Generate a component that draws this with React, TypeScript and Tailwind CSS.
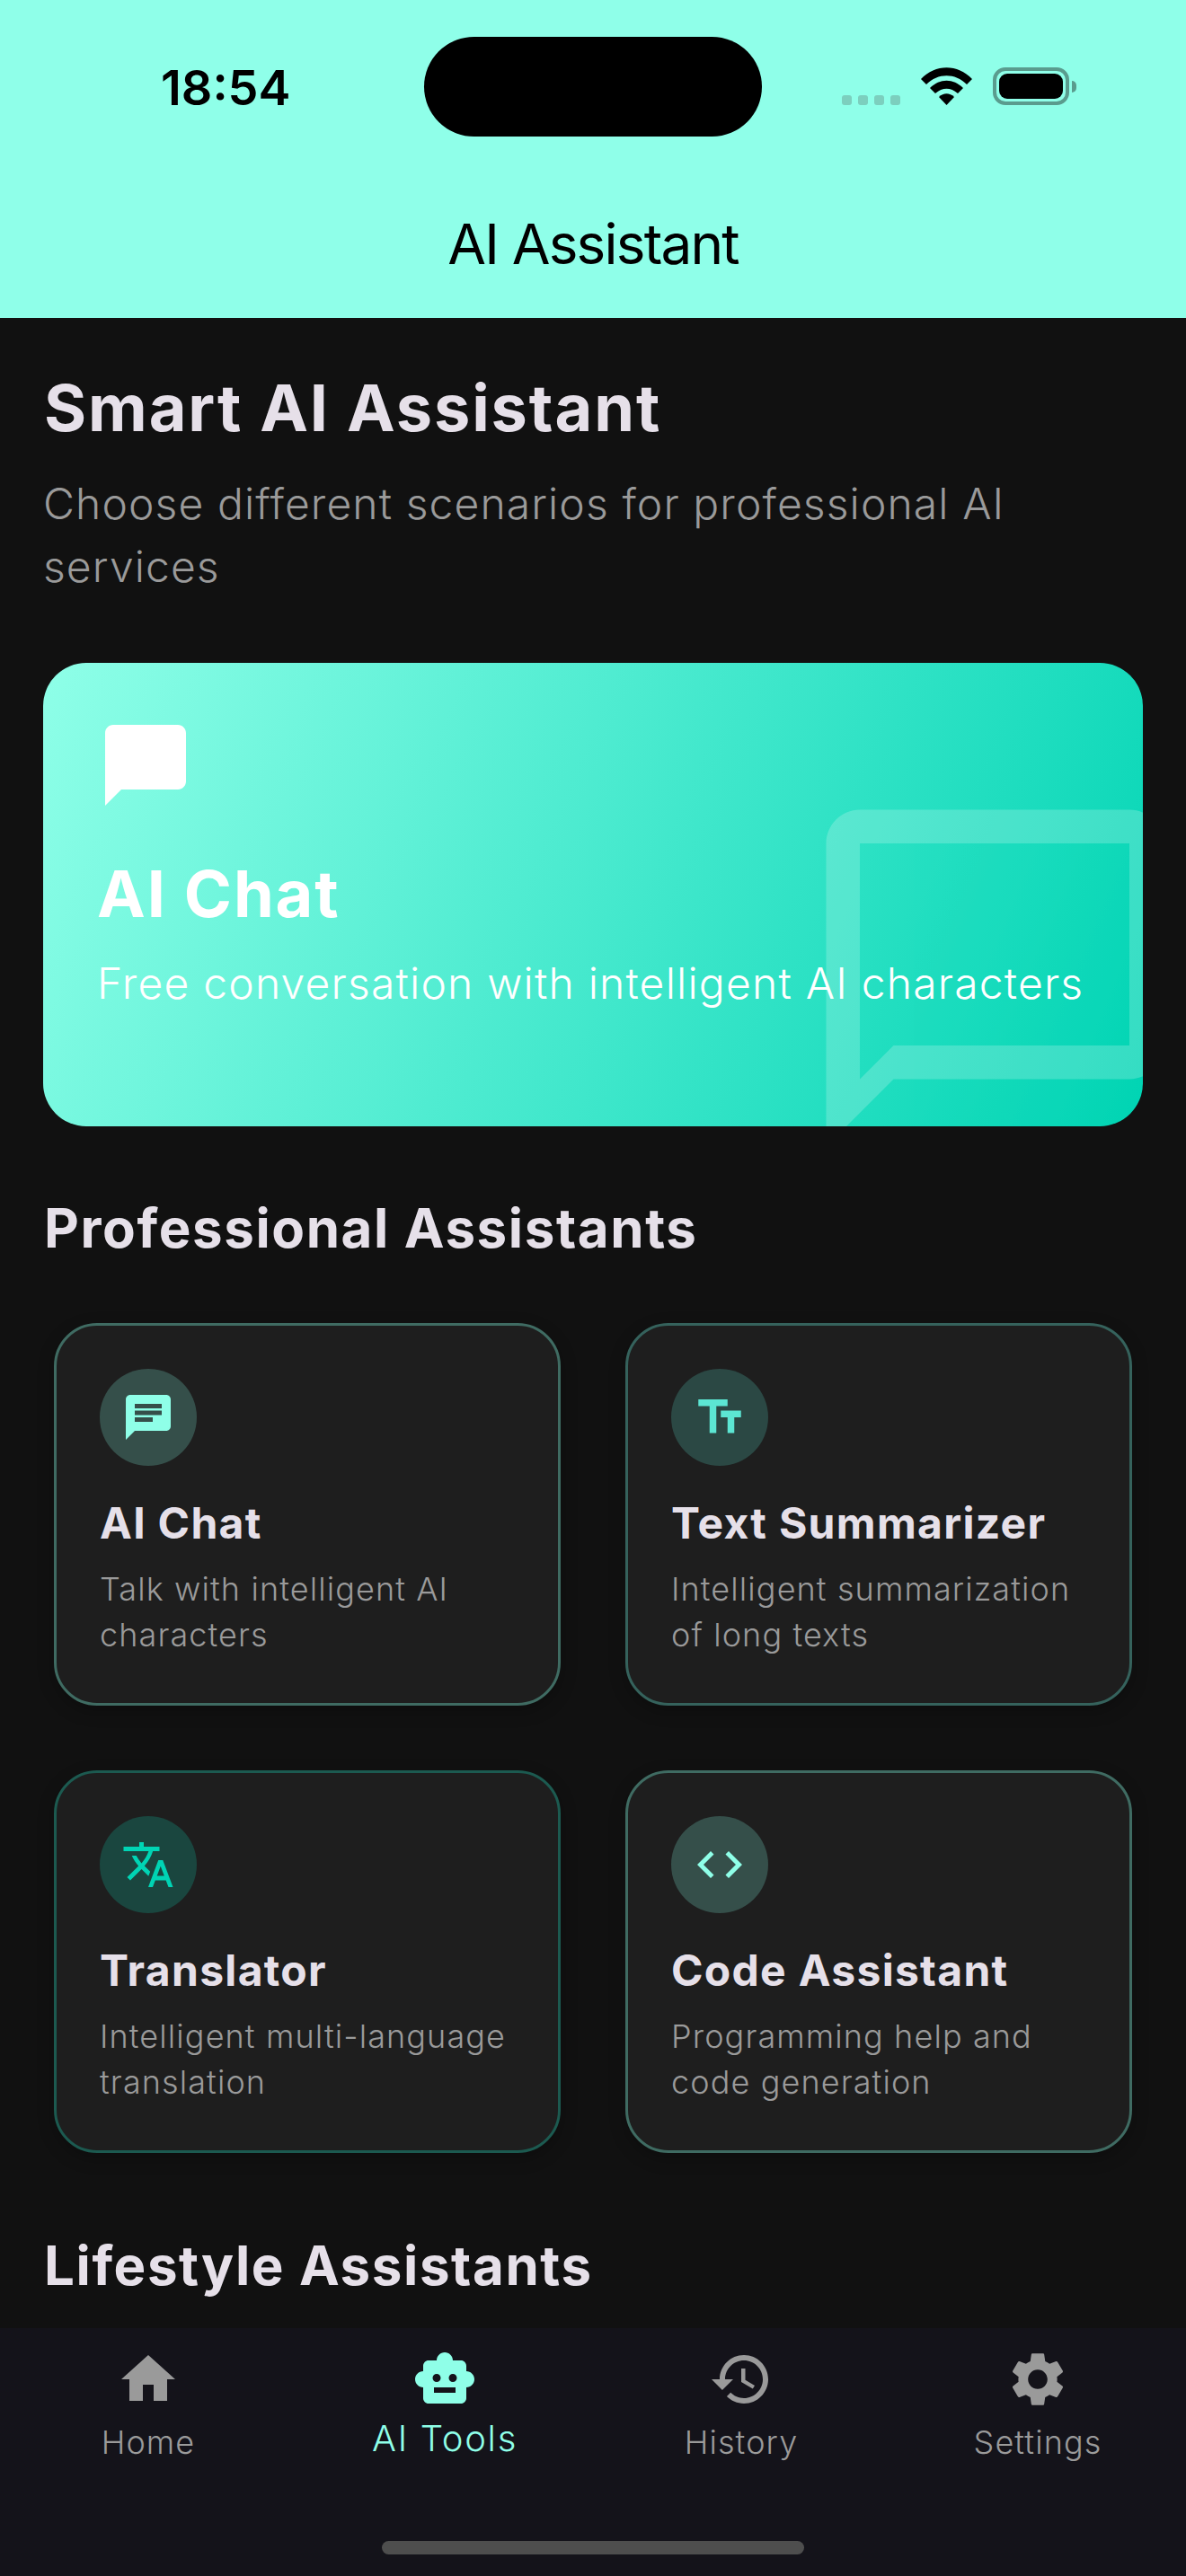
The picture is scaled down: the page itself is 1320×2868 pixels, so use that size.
const paths = {
  chatBubble: "M20 2H4c-1.1 0-2 .9-2 2v18l4-4h14c1.1 0 2-.9 2-2V4c0-1.1-.9-2-2-2z",
  chatOutline: "M20 2H4c-1.1 0-2 .9-2 2v18l4-4h14c1.1 0 2-.9 2-2V4c0-1.1-.9-2-2-2zm0 14H6l-2 2V4h16v12z",
  chat: "M20 2H4c-1.1 0-1.99.9-1.99 2L2 22l4-4h14c1.1 0 2-.9 2-2V4c0-1.1-.9-2-2-2zM6 9h12v2H6V9zm8 5H6v-2h8v2zm4-6H6V6h12v2z",
  textFields: "M2.5 4v3h5v12h3V7h5V4h-13zm19 5h-9v3h3v7h3v-7h3V9z",
  translate: "M12.87 15.07l-2.54-2.51.03-.03c1.74-1.94 2.98-4.17 3.71-6.53H17V4h-7V2H8v2H1v2h11.17C11.5 7.92 10.44 9.75 9 11.35 8.07 10.32 7.3 9.19 6.69 8h-2c.73 1.63 1.73 3.17 2.98 4.56l-5.09 5.02L4 19l5-5 3.11 3.11.76-2.04zM18.5 10h-2L12 22h2l1.12-3h4.75L21 22h2l-4.5-12zm-2.62 7l1.62-4.33L19.12 17h-3.24z",
  code: "M9.4 16.6L4.8 12l4.6-4.6L8 6l-6 6 6 6 1.4-1.4zm5.2 0l4.6-4.6-4.6-4.6L16 6l6 6-6 6-1.4-1.4z",
  home: "M10 20v-6h4v6h5v-8h3L12 3 2 12h3v8z",
  toy: "M20 9V7c0-1.1-.9-2-2-2h-3c0-1.66-1.34-3-3-3S9 3.34 9 5H6c-1.1 0-2 .9-2 2v2c-1.66 0-3 1.34-3 3s1.34 3 3 3v4c0 1.1.9 2 2 2h12c1.1 0 2-.9 2-2v-4c1.66 0 3-1.34 3-3s-1.34-3-3-3zM7.5 11.5C7.5 10.67 8.17 10 9 10s1.5.67 1.5 1.5S9.83 13 9 13s-1.5-.67-1.5-1.5zM16 17H8v-2h8v2zm-1-4c-.83 0-1.5-.67-1.5-1.5S14.17 10 15 10s1.5.67 1.5 1.5S15.83 13 15 13z",
  history: "M13 3c-4.97 0-9 4.03-9 9H1l3.89 3.89.07.14L9 12H6c0-3.87 3.13-7 7-7s7 3.13 7 7-3.13 7-7 7c-1.93 0-3.68-.79-4.94-2.06l-1.42 1.42C8.27 19.99 10.51 21 13 21c4.97 0 9-4.03 9-9s-4.03-9-9-9zm-1 5v5l4.28 2.54.72-1.21-3.5-2.08V8H12z",
  settings: "M19.14 12.94c.04-.3.06-.61.06-.94 0-.32-.02-.64-.07-.94l2.03-1.58c.18-.14.23-.41.12-.61l-1.92-3.32c-.12-.22-.37-.29-.59-.22l-2.39.96c-.5-.38-1.03-.7-1.62-.94l-.36-2.54c-.04-.24-.24-.41-.48-.41h-3.84c-.24 0-.43.17-.47.41l-.36 2.54c-.59.24-1.13.57-1.62.94l-2.39-.96c-.22-.08-.47 0-.59.22L2.74 8.87c-.12.21-.08.47.12.61l2.03 1.58c-.05.3-.09.63-.09.94s.02.64.07.94l-2.03 1.58c-.18.14-.23.41-.12.61l1.92 3.32c.12.22.37.29.59.22l2.39-.96c.5.38 1.03.7 1.62.94l.36 2.54c.05.24.24.41.48.41h3.84c.24 0 .44-.17.47-.41l.36-2.54c.59-.24 1.13-.56 1.62-.94l2.39.96c.22.08.47 0 .59-.22l1.92-3.32c.12-.22.07-.47-.12-.61l-2.01-1.58zM12 15.6c-1.98 0-3.6-1.62-3.6-3.6s1.62-3.6 3.6-3.6 3.6 1.62 3.6 3.6-1.62 3.6-3.6 3.6z",
};

function Icon({ d, className }: { d: string; className: string }) {
  return (
    <svg viewBox="0 0 24 24" fill="currentColor" className={className}>
      <path d={d} />
    </svg>
  );
}

const tools = [
  { title: "AI Chat", desc: "Talk with intelligent AI characters", icon: paths.chat, border: "border-[#3f6b62]", circle: "bg-[#354f4a]", color: "text-[#8fffe8]" },
  { title: "Text Summarizer", desc: "Intelligent summarization of long texts", icon: paths.textFields, border: "border-[#35625c]", circle: "bg-[#2b4844]", color: "text-[#5ce6d3]" },
  { title: "Translator", desc: "Intelligent multi-language translation", icon: paths.translate, border: "border-[#1c5a50]", circle: "bg-[#1a463f]", color: "text-[#00d4b4]" },
  { title: "Code Assistant", desc: "Programming help and code generation", icon: paths.code, border: "border-[#3f6b62]", circle: "bg-[#354f4a]", color: "text-[#8fffe8]" },
];

const tabs = [
  { label: "Home", icon: paths.home },
  { label: "AI Tools", icon: paths.toy, active: true },
  { label: "History", icon: paths.history },
  { label: "Settings", icon: paths.settings },
];

function StatusBar() {
  return (
    <div className="h-[192px] flex items-start pt-[41px] pl-[179px]">
      <span className="mt-[27px] w-[293px] text-[54px] leading-[60px] font-semibold text-black whitespace-nowrap">18:54</span>
      <div className="w-[376px] h-[111px] rounded-full bg-black" />
      <div className="flex items-end ml-[89px] mt-[34px] h-[42px]">
        <div className="flex gap-[7px] mr-[23px]">
          <div className="w-[11px] h-[11px] rounded-[3px] bg-[#7ccfbe]" />
          <div className="w-[11px] h-[11px] rounded-[3px] bg-[#7ccfbe]" />
          <div className="w-[11px] h-[11px] rounded-[3px] bg-[#7ccfbe]" />
          <div className="w-[11px] h-[11px] rounded-[3px] bg-[#7ccfbe]" />
        </div>
        <svg viewBox="0 0 57 42" className="w-[57px] h-[42px] mr-[23px]" fill="#000">
          <path d="M0 13 C16 -4 41 -4 57 13 L51 19 C38 6 19 6 6 19 Z" />
          <path d="M10 23 C21 12 36 12 47 23 L41 29 C33 22 24 22 16 29 Z" />
          <path d="M20 33 C25 28 32 28 37 33 L28.5 42 Z" />
        </svg>
        <div className="w-[85px] h-[42px] rounded-[14px] border-[4px] border-[#5a9c8e] p-[3px]">
          <div className="w-full h-full rounded-[9px] bg-black" />
        </div>
        <div className="w-[5px] h-[13px] mb-[14px] ml-[3px] rounded-r-full bg-[#5a9c8e]" />
      </div>
    </div>
  );
}

export default function App() {
  return (
    <div className="w-[1320px] h-[2868px] flex flex-col overflow-hidden bg-[#111111] font-['Inter',sans-serif]">
      <header className="h-[354px] shrink-0 bg-[#8fffe9]">
        <StatusBar />
        <h1 className="mt-[46px] text-center text-[62px] leading-[68px] font-normal text-black tracking-[-1.8px]">AI Assistant</h1>
      </header>

      <main className="flex-1 min-h-0 overflow-hidden">
        <h2 className="mt-[58px] ml-[49px] text-[72px] leading-[84px] font-bold tracking-[1.9px] text-[#e6e0e9]">Smart AI Assistant</h2>
        <p className="mt-[30px] mx-[48px] text-[48px] leading-[70px] font-[350] tracking-[1.1px] text-[#9a9a9a]">Choose different scenarios for professional AI services</p>

        <section className="relative mt-[72px] mx-[48px] h-[516px] rounded-[48px] overflow-hidden bg-[linear-gradient(113deg,#8fffe8,#00d4b4)] p-[60px]">
          <Icon d={paths.chatOutline} className="absolute right-[-60px] bottom-[-60px] w-[450px] h-[450px] text-white opacity-20" />
          <Icon d={paths.chatBubble} className="relative w-[108px] h-[108px] text-white" />
          <h3 className="relative mt-[47px] text-[72px] leading-[84px] font-bold tracking-[1.9px] text-white">AI Chat</h3>
          <p className="relative mt-[26px] text-[48px] leading-[64px] font-[350] tracking-[1.2px] text-white whitespace-nowrap">Free conversation with intelligent AI characters</p>
        </section>

        <h2 className="mt-[78px] ml-[49px] text-[60px] leading-[70px] font-bold tracking-[1.6px] text-[#e6e0e9]">Professional Assistants</h2>

        <div className="mt-[71px] mx-[60px] grid grid-cols-2 gap-[72px]">
          {tools.map((t) => (
            <div key={t.title} className={`h-[426px] rounded-[48px] border-[3px] ${t.border} bg-[#1e1e1e] p-[48px] shadow-[0_6px_18px_rgba(0,0,0,0.25)]`}>
              <div className={`w-[108px] h-[108px] rounded-full flex items-center justify-center ${t.circle}`}>
                <Icon d={t.icon} className={`w-[60px] h-[60px] ${t.color}`} />
              </div>
              <h4 className="mt-[36px] text-[48px] leading-[56px] font-bold tracking-[1.3px] text-[#e6e0e9]">{t.title}</h4>
              <p className="mt-[20px] text-[36px] leading-[51px] font-[350] tracking-[1.1px] text-[#9a9a9a]">{t.desc}</p>
            </div>
          ))}
        </div>

        <h2 className="mt-[90px] ml-[49px] text-[60px] leading-[70px] font-bold tracking-[1.6px] text-[#e6e0e9]">Lifestyle Assistants</h2>
      </main>

      <nav className="relative h-[276px] shrink-0 bg-[#14131a]">
        <div className="grid grid-cols-4 pt-[21px]">
          {tabs.map((t) => (
            <div key={t.label} className="flex flex-col items-center">
              <Icon d={t.icon} className={`w-[72px] h-[72px] ${t.active ? "text-[#8fffe8]" : "text-[#9a9a9a]"}`} />
              {t.active ? (
                <span className="mt-[4px] text-[40px] leading-[52px] font-[350] tracking-[1.7px] text-[#8fffe8]">{t.label}</span>
              ) : (
                <span className="mt-[8px] text-[36px] leading-[52px] font-[350] tracking-[1.1px] text-[#9a9a9a]">{t.label}</span>
              )}
            </div>
          ))}
        </div>
        <div className="absolute left-[425px] bottom-[24px] w-[470px] h-[15px] rounded-full bg-[#4e4e4e]" />
      </nav>
    </div>
  );
}
